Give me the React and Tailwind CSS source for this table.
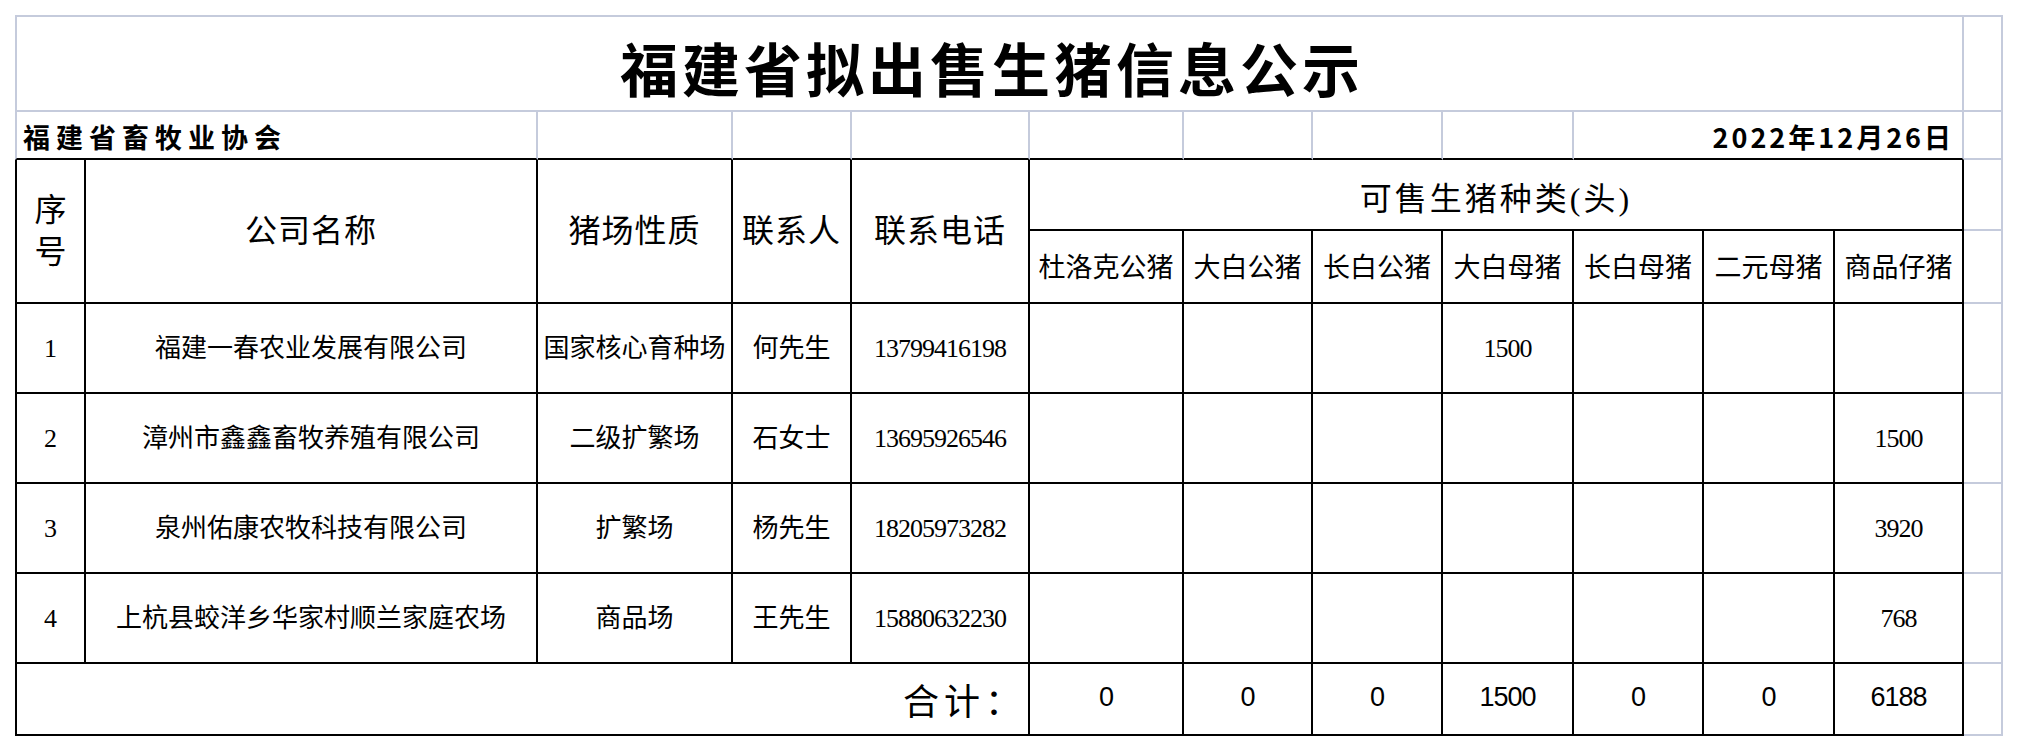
import React from 'react';

const rows = [
  { no: '1', name: '福建一春农业发展有限公司', type: '国家核心育种场', person: '何先生', phone: '13799416198', vals: ['', '', '', '1500', '', '', ''] },
  { no: '2', name: '漳州市鑫鑫畜牧养殖有限公司', type: '二级扩繁场', person: '石女士', phone: '13695926546', vals: ['', '', '', '', '', '', '1500'] },
  { no: '3', name: '泉州佑康农牧科技有限公司', type: '扩繁场', person: '杨先生', phone: '18205973282', vals: ['', '', '', '', '', '', '3920'] },
  { no: '4', name: '上杭县蛟洋乡华家村顺兰家庭农场', type: '商品场', person: '王先生', phone: '15880632230', vals: ['', '', '', '', '', '', '768'] },
];

const breeds = ['杜洛克公猪', '大白公猪', '长白公猪', '大白母猪', '长白母猪', '二元母猪', '商品仔猪'];
const totals = ['0', '0', '0', '1500', '0', '0', '6188'];

// black-bordered table cell
const cell = 'flex items-center justify-center border-r-2 border-b-2 border-black';
// spreadsheet gridline cell
const grid = 'border-r-2 border-b-2 border-[#c5cbdc]';
const serif = "font-['Liberation_Serif','Noto_Sans_CJK_SC',serif]";

export default function App() {
  return (
    <div className="min-h-[752px] w-[2020px] bg-white pl-[15px] pt-[15px] text-black">
      <div className="grid grid-cols-[71px_452px_195px_119px_178px_154px_129px_130px_131px_130px_131px_129px_39px] grid-rows-[97px_48px_71px_73px_90px_90px_90px_90px_72px]">
        {/* title row */}
        <div className={`col-span-12 flex items-center justify-center border-l-2 border-t-2 ${grid} pt-2 pl-[5px] font-['Noto_Sans_CJK_SC',sans-serif] text-[58px] font-bold tracking-[4px]`}>
          福建省拟出售生猪信息公示
        </div>
        <div className={`border-t-2 ${grid}`} />

        {/* sub header row */}
        <div className="col-span-2 flex items-center border-b-2 border-l-2 border-r-2 border-b-black border-l-[#c5cbdc] border-r-[#c5cbdc] pl-[6px] pt-1 font-['Noto_Sans_CJK_SC',sans-serif] text-[27px] font-bold tracking-[6px]">
          福建省畜牧业协会
        </div>
        {[0, 1, 2, 3, 4, 5, 6].map((i) => (
          <div key={i} className="border-b-2 border-r-2 border-b-black border-r-[#c5cbdc]" />
        ))}
        <div className="col-span-3 flex items-center justify-end border-b-2 border-r-2 border-b-black border-r-[#c5cbdc] pr-[8px] pt-1 font-['Noto_Sans_CJK_SC',sans-serif] text-[27px] font-bold tracking-[3px]">
          2022年12月26日
        </div>
        <div className={grid} />

        {/* header */}
        <div className={`row-span-2 border-l-2 ${cell} ${serif} text-center text-[32px] leading-[42px]`}>
          序<br />号
        </div>
        <div className={`row-span-2 ${cell} ${serif} text-[32px] tracking-[1px]`}>公司名称</div>
        <div className={`row-span-2 ${cell} ${serif} text-[32px] tracking-[1px]`}>猪场性质</div>
        <div className={`row-span-2 ${cell} ${serif} text-[32px] tracking-[1px]`}>联系人</div>
        <div className={`row-span-2 ${cell} ${serif} text-[32px] tracking-[1px]`}>联系电话</div>
        <div className={`col-span-7 ${cell} ${serif} pt-2 text-[32px] tracking-[3px]`}>可售生猪种类(头)</div>
        <div className={grid} />
        {breeds.map((b) => (
          <div key={b} className={`${cell} ${serif} pt-1 text-[27px]`}>{b}</div>
        ))}
        <div className={grid} />

        {/* data rows */}
        {rows.map((r) => (
          <React.Fragment key={r.no}>
            <div className={`border-l-2 ${cell} ${serif} text-[26px]`}>{r.no}</div>
            <div className={`${cell} ${serif} text-[26px]`}>{r.name}</div>
            <div className={`${cell} ${serif} text-[26px]`}>{r.type}</div>
            <div className={`${cell} ${serif} text-[26px]`}>{r.person}</div>
            <div className={`${cell} ${serif} text-[26px] tracking-[-1px]`}>{r.phone}</div>
            {r.vals.map((v, i) => (
              <div key={i} className={`${cell} ${serif} text-[26px] tracking-[-1px]`}>{v}</div>
            ))}
            <div className={grid} />
          </React.Fragment>
        ))}

        {/* totals */}
        <div className={`col-span-5 flex items-center justify-end border-l-2 border-r-2 border-b-2 border-black pr-[2px] font-['Noto_Sans_CJK_SC',sans-serif] text-[36px] tracking-[5px]`}>
          合计：
        </div>
        {totals.map((t, i) => (
          <div key={i} className={`${cell} pb-1 font-['Liberation_Sans',sans-serif] text-[27px] tracking-[-1px]`}>{t}</div>
        ))}
        <div className={grid} />
      </div>
    </div>
  );
}
